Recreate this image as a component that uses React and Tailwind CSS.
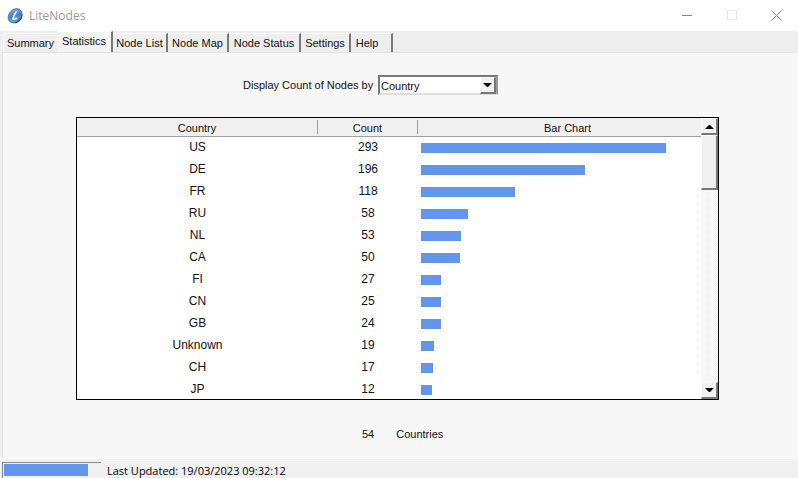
import { useState } from 'react';

const TABS = [
  { name: 'Summary', width: 'w-[54px]' },
  { name: 'Statistics', width: 'w-[56px]' },
  { name: 'Node List', width: 'w-[55px]' },
  { name: 'Node Map', width: 'w-[61px]' },
  { name: 'Node Status', width: 'w-[72px]' },
  { name: 'Settings', width: 'w-[50px]' },
  { name: 'Help', width: 'w-[42px]' },
];

const ROWS = [
  { country: 'US', count: 293, bar: 245 },
  { country: 'DE', count: 196, bar: 164 },
  { country: 'FR', count: 118, bar: 94 },
  { country: 'RU', count: 58, bar: 47 },
  { country: 'NL', count: 53, bar: 40 },
  { country: 'CA', count: 50, bar: 39 },
  { country: 'FI', count: 27, bar: 20 },
  { country: 'CN', count: 25, bar: 20 },
  { country: 'GB', count: 24, bar: 20 },
  { country: 'Unknown', count: 19, bar: 13 },
  { country: 'CH', count: 17, bar: 12 },
  { country: 'JP', count: 12, bar: 11 },
];

export default function App() {
  const [active, setActive] = useState('Statistics');
  const [groupBy, setGroupBy] = useState('Country');

  return (
    <div className="flex h-screen flex-col overflow-hidden bg-[#f0f0f0] font-['Liberation_Sans',Arial,sans-serif] text-[11px] leading-4 text-[#111]">
      <TitleBar />

      {/* ================= TABS ================= */}
      <div role="tablist" className="flex h-[21px] shrink-0 items-end bg-[#eeeeee] pl-[3px]">
        {TABS.map((tab) => (
          <Tab
            key={tab.name}
            tab={tab}
            selected={tab.name === active}
            onClick={() => setActive(tab.name)}
          />
        ))}
      </div>

      {/* ================= STATISTICS ================= */}
      <main className="ml-[2px] flex min-h-0 flex-1 flex-col border-t border-l border-[#e2e2e2] bg-[#f7f7f7] pr-[79px] pl-[73px]">
        <div className="flex items-center pt-[22px] pl-[167px]">
          <label htmlFor="group-by" className="w-[135px]">
            Display Count of Nodes by
          </label>
          <div className="relative h-5 w-[120px]">
            <select
              id="group-by"
              value={groupBy}
              onChange={(e) => setGroupBy(e.target.value)}
              className="h-5 w-full appearance-none border-2 border-t-[#777] border-r-[#999] border-b-[#ddd] border-l-[#777] bg-white pt-px pl-px text-[11px] leading-4 outline-none"
            >
              <option>Country</option>
              <option>City</option>
              <option>Version</option>
            </select>
            <span className="pointer-events-none absolute top-[2px] right-[2px] flex h-[17px] w-4 items-center justify-center border-t border-r-2 border-b-2 border-l border-t-white border-r-[#777] border-b-[#777] border-l-white bg-[#f0f0f0]">
              <Arrow />
            </span>
          </div>
        </div>

        <div className="mt-[22px] flex min-h-0 flex-1 border border-black bg-white">
          <div className="min-w-0 flex-1 overflow-hidden">
            <table className="w-full table-fixed border-collapse text-center">
              <colgroup>
                <col className="w-[241px]" />
                <col className="w-[100px]" />
                <col />
              </colgroup>
              <thead>
                <tr className="h-[18px] border-b border-[#a0a0a0] bg-[#f0f0f0]">
                  <HeaderCell divider>Country</HeaderCell>
                  <HeaderCell divider>Count</HeaderCell>
                  <HeaderCell>
                    <span className="pl-4">Bar Chart</span>
                  </HeaderCell>
                </tr>
              </thead>
              <tbody className="text-xs">
                {ROWS.map((row) => (
                  <tr key={row.country} className="h-[22px]">
                    <td className="p-0">{row.country}</td>
                    <td className="p-0">{row.count}</td>
                    <td className="p-0 pt-[2px] pl-[3px]">
                      <div className="h-[10px] bg-[#6495ed]" style={{ width: row.bar }} />
                    </td>
                  </tr>
                ))}
              </tbody>
            </table>
          </div>
          <ScrollBar />
        </div>

        <div className="flex gap-[22px] pt-[26px] pb-4 pl-[286px]">
          <span>54</span>
          <span>Countries</span>
        </div>
      </main>

      {/* ================= STATUS BAR ================= */}
      <footer className="flex h-5 shrink-0 items-end border-t border-white bg-[#f0f0f0] pl-[2px] font-['Open_Sans',sans-serif]">
        <div className="h-4 w-[99px] border-t border-l border-[#888] bg-[#f0f0f0] p-px">
          <div className="h-3 w-[84px] bg-[#6495ed]" />
        </div>
        <p className="pl-[6px] leading-[14px] text-black">Last Updated: 19/03/2023 09:32:12</p>
      </footer>
    </div>
  );
}

/* ================= COMPONENTS ================= */

const TitleBar = () => (
  <header className="flex h-[31px] shrink-0 items-center bg-white pl-[7px]">
    <Logo />
    <h1 className="flex-1 pl-[6px] font-['Open_Sans',sans-serif] text-xs text-[#999]">
      LiteNodes
    </h1>
    <button aria-label="Minimize" className="flex h-full w-[46px] items-center justify-center">
      <svg width="11" height="11" viewBox="0 0 11 11" fill="none" stroke="#888">
        <path d="M0 5.5h10" />
      </svg>
    </button>
    <button aria-label="Maximize" disabled className="flex h-full w-[45px] items-center justify-center">
      <svg width="11" height="11" viewBox="0 0 11 11" fill="none" stroke="#e8e8e8">
        <path d="M.5.5h9v9h-9z" />
      </svg>
    </button>
    <button aria-label="Close" className="flex h-full w-[43px] items-center justify-center">
      <svg width="11" height="11" viewBox="0 0 11 11" fill="none" stroke="#808080">
        <path d="M.5.5l10 10M10.5.5l-10 10" />
      </svg>
    </button>
  </header>
);

const Logo = () => (
  <svg width="16" height="16" viewBox="0 0 16 16">
    <defs>
      <linearGradient id="coin" x1="0" y1="0" x2="1" y2="1">
        <stop offset="0" stopColor="#8fb4de" />
        <stop offset="0.5" stopColor="#4c80cc" />
        <stop offset="1" stopColor="#6fb2e6" />
      </linearGradient>
    </defs>
    <ellipse cx="9" cy="8.5" rx="6" ry="7.4" transform="rotate(40 9 8.5)" fill="#28498a" />
    <ellipse cx="7.8" cy="7.6" rx="5.8" ry="7.8" transform="rotate(40 7.8 7.6)" fill="url(#coin)" stroke="#4878b4" strokeWidth=".8" />
    <path d="M9.6 3.2C8 5 6.600 8 6 10.800c1.500.3 2.800 0 4.200-.8" fill="none" stroke="#eef5ff" strokeWidth="1.700" />
  </svg>
);

const Tab = ({ tab, selected, onClick }) => (
  <button
    role="tab"
    aria-selected={selected}
    onClick={onClick}
    className={`${tab.width} shrink-0 border-t border-t-white text-center whitespace-nowrap ${
      selected
        ? 'h-[21px] border-r-2 border-r-[#777] bg-[#f4f4f4] pb-[2px]'
        : tab.name === 'Summary'
          ? 'h-[19px] border-l border-l-white'
          : 'h-[19px] border-r-2 border-r-[#777]'
    } ${tab.name === 'Help' ? 'pr-2' : ''}`}
  >
    {tab.name}
  </button>
);

const HeaderCell = ({ divider, children }) => (
  <th scope="col" className="p-0 font-normal">
    <div className={divider ? 'h-[14px] border-r border-[#a0a0a0] leading-4' : 'h-[14px] leading-4'}>
      {children}
    </div>
  </th>
);

const Arrow = ({ up }) => (
  <svg width="9" height="5" viewBox="0 0 9 5" fill="#000">
    <path d={up ? 'M0 5L4 1h1l4 4z' : 'M0 0h9L5 4H4z'} />
  </svg>
);

const ScrollBar = () => (
  <div className="flex w-[17px] shrink-0 flex-col bg-[repeating-conic-gradient(#f0f0f0_0_25%,#fff_0_50%)] bg-[length:2px_2px]">
    <ScrollButton label="Scroll up" up />
    <div className="h-[55px] border-t border-r-2 border-b-2 border-l border-t-white border-r-[#777] border-b-[#777] border-l-white bg-[#f0f0f0]" />
    <div className="flex-1" />
    <ScrollButton label="Scroll down" />
  </div>
);

const ScrollButton = ({ label, up }) => (
  <button
    aria-label={label}
    className="flex h-[17px] w-full items-center justify-center border-t border-r-2 border-b-2 border-l border-t-white border-r-[#777] border-b-[#777] border-l-white bg-[#f0f0f0]"
  >
    <Arrow up={up} />
  </button>
);
